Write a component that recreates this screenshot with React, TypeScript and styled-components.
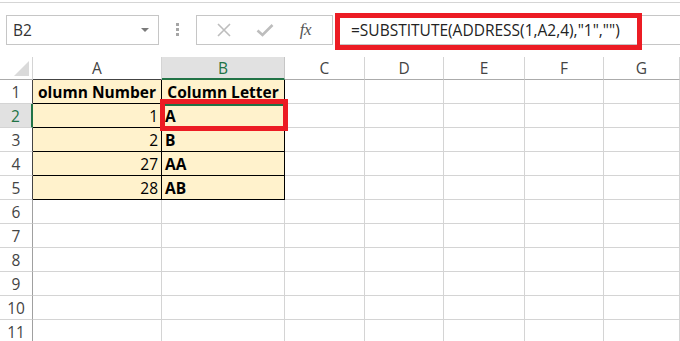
import React from "react";
import styled, { createGlobalStyle } from "styled-components";

const Global = createGlobalStyle`
  html, body { margin: 0; padding: 0; background: #ffffff; }
  body { width: 680px; height: 341px; overflow: hidden; font-family: "Open Sans", "Lato", sans-serif; }
  * { box-sizing: border-box; }
`;

const Page = styled.div`
  width: 680px;
  height: 341px;
  overflow: hidden;
  background: #ffffff;
`;

const TopRule = styled.div`
  height: 3px;
  border-bottom: 1px solid #d5d5d5;
`;

const Toolbar = styled.div`
  height: 54px;
  display: flex;
  align-items: flex-start;
  padding: 12px 0 0 6px;
`;

const NameBox = styled.div`
  width: 153px;
  height: 30px;
  border: 1px solid #c6c6c6;
  display: flex;
  align-items: center;
  justify-content: space-between;
  padding: 0 9px 0 6px;
  font-family: "Open Sans", "Lato", sans-serif;
  font-size: 15.5px;
  color: #333333;
`;

const Caret = styled.span`
  width: 0;
  height: 0;
  border-left: 4px solid transparent;
  border-right: 4px solid transparent;
  border-top: 4px solid #7a7a7a;
`;

const Dots = styled.div`
  width: 4px;
  margin: 8px 0 0 17px;
  display: flex;
  flex-direction: column;
  gap: 2px;
`;

const Dot = styled.span`
  width: 3px;
  height: 3px;
  background: #a6a6a6;
`;

const FxBox = styled.div`
  width: 137px;
  height: 30px;
  margin-left: 16px;
  border: 1px solid #c6c6c6;
  display: flex;
  align-items: center;
  justify-content: space-around;
  padding: 0 6px;
`;

const IconSlot = styled.span`
  width: 24px;
  height: 24px;
  display: flex;
  align-items: center;
  justify-content: center;
`;

const FxText = styled.span`
  font-family: "Liberation Serif", "DejaVu Serif", serif;
  font-style: italic;
  font-size: 17px;
  color: #555555;
  letter-spacing: -0.5px;
`;

const FormulaBox = styled.div`
  position: relative;
  flex: 1;
  height: 30px;
  margin-left: 2px;
  border-top: 1px solid #c6c6c6;
  border-bottom: 1px solid #c6c6c6;
  border-left: 1px solid #c6c6c6;
  display: flex;
  align-items: center;
  padding-left: 15px;
  font-family: "Open Sans", "Lato", sans-serif;
  font-size: 15.5px;
  color: #222222;
  white-space: nowrap;
`;

const Highlight = styled.div<{ $top: number; $left: number; $w: number; $h: number }>`
  position: absolute;
  top: ${(p) => p.$top}px;
  left: ${(p) => p.$left}px;
  width: ${(p) => p.$w}px;
  height: ${(p) => p.$h}px;
  border: 5px solid #ec1c24;
  pointer-events: none;
`;

const Grid = styled.div`
  position: relative;
  display: grid;
  grid-template-columns: 33px 129px 123px 80px 79px 81px 79px 1fr;
  grid-template-rows: 23px repeat(11, 24px);
`;

const Corner = styled.div`
  border-right: 1px solid #d4d4d4;
  border-bottom: 1px solid #ababab;
  display: flex;
  align-items: flex-end;
  justify-content: flex-end;
  padding: 0 3px 3px 0;
`;

const CornerTriangle = styled.span`
  width: 0;
  height: 0;
  border-left: 15px solid transparent;
  border-bottom: 15px solid #dadada;
`;

const ColHead = styled.div<{ $sel?: boolean; $bottom: string }>`
  display: flex;
  align-items: center;
  justify-content: center;
  font-family: "Open Sans", "Lato", sans-serif;
  font-size: 15.5px;
  color: ${(p) => (p.$sel ? "#217346" : "#444444")};
  background: ${(p) => (p.$sel ? "#e1e1e1" : "#ffffff")};
  border-right: 1px solid ${(p) => (p.$sel ? "#c6c6c6" : "#d4d4d4")};
  border-bottom: ${(p) => (p.$sel ? "2px solid #217346" : `1px solid ${p.$bottom}`)};
`;

const RowHead = styled.div<{ $sel?: boolean; $right: string }>`
  display: flex;
  align-items: center;
  justify-content: center;
  font-family: "Open Sans", "Lato", sans-serif;
  font-size: 15.5px;
  color: ${(p) => (p.$sel ? "#217346" : "#444444")};
  background: ${(p) => (p.$sel ? "#e1e1e1" : "#ffffff")};
  border-bottom: 1px solid #d4d4d4;
  border-right: ${(p) => (p.$sel ? "2px solid #217346" : `1px solid ${p.$right}`)};
`;

const Cell = styled.div<{ $data?: boolean; $align?: "left" | "right" | "center"; $bold?: boolean; $active?: boolean }>`
  display: flex;
  align-items: center;
  justify-content: ${(p) => (p.$align === "right" ? "flex-end" : p.$align === "center" ? "center" : "flex-start")};
  padding: 0 3px;
  overflow: hidden;
  white-space: nowrap;
  font-family: "Open Sans", "Lato", sans-serif;
  font-size: 15.5px;
  font-weight: ${(p) => (p.$bold ? 700 : 400)};
  color: #000000;
  background: ${(p) => (p.$data ? "#fff2cc" : "#ffffff")};
  border-right: 1px solid ${(p) => (p.$data ? "#000000" : "#d4d4d4")};
  border-bottom: 1px solid ${(p) => (p.$data ? "#000000" : "#d4d4d4")};
  box-shadow: ${(p) => (p.$active ? "inset 0 2px 0 #217346" : "none")};
`;

const cols = ["A", "B", "C", "D", "E", "F", "G"];

type Row = { a: string; b: string; header?: boolean };
const data: Row[] = [
  { a: "olumn Number", b: "Column Letter", header: true },
  { a: "1", b: "A" },
  { a: "2", b: "B" },
  { a: "27", b: "AA" },
  { a: "28", b: "AB" },
];

export default function App() {
  const rows = Array.from({ length: 11 }, (_, i) => i + 1);
  return (
    <Page>
      <Global />
      <TopRule />
      <Toolbar>
        <NameBox>
          <span>B2</span>
          <Caret />
        </NameBox>
        <Dots>
          <Dot />
          <Dot />
          <Dot />
        </Dots>
        <FxBox>
          <IconSlot>
            <svg width="14" height="14" viewBox="0 0 14 14">
              <path d="M1 1 L13 13 M13 1 L1 13" stroke="#bdbdbd" strokeWidth="1.6" fill="none" />
            </svg>
          </IconSlot>
          <IconSlot>
            <svg width="18" height="14" viewBox="0 0 18 14">
              <path d="M1.5 7.5 L6.5 12 L16.5 2" stroke="#bdbdbd" strokeWidth="2.6" fill="none" />
            </svg>
          </IconSlot>
          <IconSlot>
            <FxText>fx</FxText>
          </IconSlot>
        </FxBox>
        <FormulaBox>
          =SUBSTITUTE(ADDRESS(1,A2,4),"1","")
          <Highlight $top={-3} $left={-1} $w={307} $h={37} />
        </FormulaBox>
      </Toolbar>
      <Grid>
        <Corner>
          <CornerTriangle />
        </Corner>
        {cols.map((c, i) => (
          <ColHead key={c} $sel={c === "B"} $bottom={i < 2 ? "#444444" : "#ababab"}>
            {c}
          </ColHead>
        ))}
        {rows.map((r) => {
          const d = data[r - 1];
          return (
            <React.Fragment key={r}>
              <RowHead $sel={r === 2} $right={d ? "#444444" : "#a0a0a0"}>
                {r}
              </RowHead>
              {cols.map((c) => {
                if (d && c === "A")
                  return (
                    <Cell key={c} $data $bold={d.header} $align={d.header ? "center" : "right"}>
                      {d.a}
                    </Cell>
                  );
                if (d && c === "B")
                  return (
                    <Cell key={c} $data $bold $align={d.header ? "center" : "left"} $active={r === 2}>
                      {d.b}
                    </Cell>
                  );
                return <Cell key={c} />;
              })}
            </React.Fragment>
          );
        })}
        <Highlight $top={42} $left={160} $w={128} $h={32} />
      </Grid>
    </Page>
  );
}
